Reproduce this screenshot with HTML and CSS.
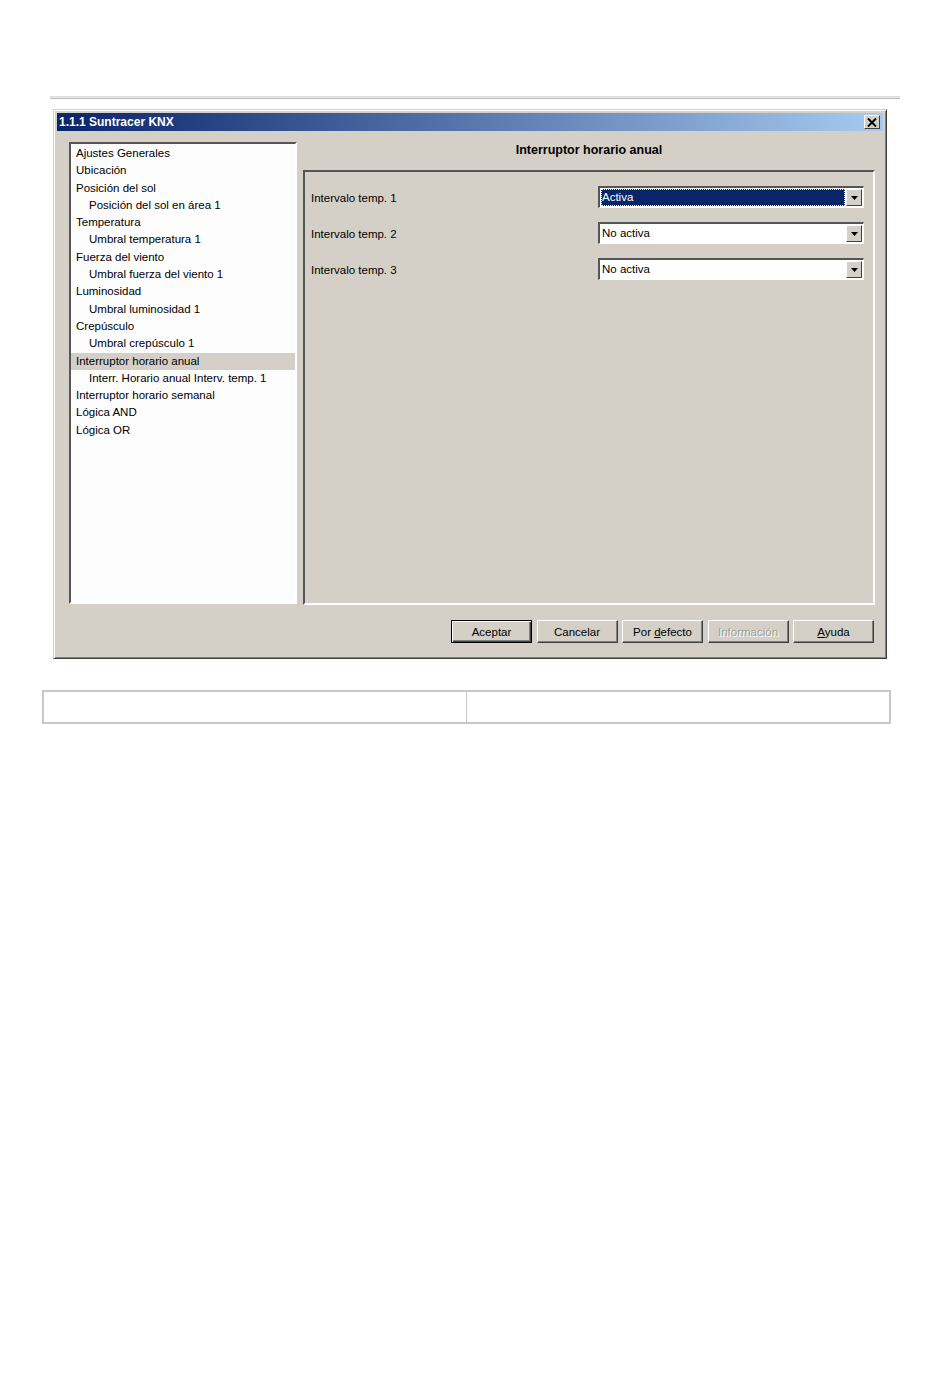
FILE: index.html
```html
<!DOCTYPE html>
<html>
<head>
<meta charset="utf-8">
<link rel="stylesheet" href="styles.css">
</head>
<body>
<div class="rule"></div>
<div class="dialog">
  <div class="titlebar">
    <span class="title">1.1.1 Suntracer KNX</span>
    <span class="close"><svg width="10" height="9" viewBox="0 0 10 9"><path d="M1 0.5 L9 8.5 M9 0.5 L1 8.5" stroke="#000" stroke-width="2"/></svg></span>
  </div>
  <div class="content">
    <div class="tree">
      <div class="item">Ajustes Generales</div>
      <div class="item">Ubicación</div>
      <div class="item">Posición del sol</div>
      <div class="item sub">Posición del sol en área 1</div>
      <div class="item">Temperatura</div>
      <div class="item sub">Umbral temperatura 1</div>
      <div class="item">Fuerza del viento</div>
      <div class="item sub">Umbral fuerza del viento 1</div>
      <div class="item">Luminosidad</div>
      <div class="item sub">Umbral luminosidad 1</div>
      <div class="item">Crepúsculo</div>
      <div class="item sub">Umbral crepúsculo 1</div>
      <div class="item selected">Interruptor horario anual</div>
      <div class="item sub">Interr. Horario anual Interv. temp. 1</div>
      <div class="item">Interruptor horario semanal</div>
      <div class="item">Lógica AND</div>
      <div class="item">Lógica OR</div>
    </div>
    <div class="right">
      <div class="heading">Interruptor horario anual</div>
      <div class="panel">
        <div class="row">
          <span class="label">Intervalo temp. 1</span>
          <div class="combo"><span class="value focused">Activa</span><span class="arrow"><svg width="7" height="4" viewBox="0 0 7 4"><path d="M0 0 H7 L3.5 4 Z" fill="#000"/></svg></span></div>
        </div>
        <div class="row">
          <span class="label">Intervalo temp. 2</span>
          <div class="combo"><span class="value">No activa</span><span class="arrow"><svg width="7" height="4" viewBox="0 0 7 4"><path d="M0 0 H7 L3.5 4 Z" fill="#000"/></svg></span></div>
        </div>
        <div class="row">
          <span class="label">Intervalo temp. 3</span>
          <div class="combo"><span class="value">No activa</span><span class="arrow"><svg width="7" height="4" viewBox="0 0 7 4"><path d="M0 0 H7 L3.5 4 Z" fill="#000"/></svg></span></div>
        </div>
      </div>
    </div>
  </div>
  <div class="buttons">
    <button class="btn default">Aceptar</button>
    <button class="btn">Cancelar</button>
    <button class="btn">Por <u>d</u>efecto</button>
    <button class="btn disabled">Información</button>
    <button class="btn"><u>A</u>yuda</button>
  </div>
</div>
<table class="grid">
  <tr><td></td><td></td></tr>
</table>
</body>
</html>
```

FILE: styles.css
```css
* { box-sizing: border-box; }
body {
  margin: 0;
  background: #fff;
  font-family: "Liberation Sans", Arial, sans-serif;
  font-size: 11.5px;
  color: #000;
}
.rule {
  margin: 96px 0 0 50px;
  width: 850px;
  height: 3px;
  border-top: 1px solid #dcdcdc;
  border-bottom: 1px solid #bdbdbd;
  background: #e6e6e6;
}
.dialog {
  margin: 10px 0 0 53px;
  width: 834px;
  height: 550px;
  background: #d4d0c8;
  border-top: 1px solid #d4d0c8;
  border-left: 1px solid #d4d0c8;
  border-right: 1px solid #404040;
  border-bottom: 1px solid #404040;
  box-shadow: inset 1px 1px 0 #fff, inset -1px -1px 0 #808080;
  padding: 3px 3px 0 3px;
  display: flex;
  flex-direction: column;
}
.titlebar {
  height: 18px;
  background: linear-gradient(to right, #0a246a, #a6caf0);
  display: flex;
  align-items: center;
  justify-content: space-between;
  padding: 0 3px 0 2px;
}
.title {
  color: #fff;
  font-weight: bold;
  font-size: 12px;
}
.close {
  width: 16px;
  height: 14px;
  background: #d4d0c8;
  border-top: 1px solid #fff;
  border-left: 1px solid #fff;
  border-right: 1px solid #404040;
  border-bottom: 1px solid #404040;
  display: flex;
  align-items: center;
  justify-content: center;
}
.content {
  display: flex;
  gap: 6px;
  padding: 11px 0 0 12px;
}
.tree {
  width: 228px;
  height: 462px;
  background: #fdfdfd;
  border-top: 2px solid #555;
  border-left: 2px solid #555;
  border-right: 2px solid #fff;
  border-bottom: 2px solid #fff;
  padding: 1px 0 0 0;
}
.item {
  height: 17.3px;
  line-height: 17px;
  padding-left: 5px;
  white-space: nowrap;
}
.item.sub { padding-left: 18px; }
.item.selected { background: #d4d0c8; }
.right {
  width: 572px;
  display: flex;
  flex-direction: column;
}
.heading {
  height: 28px;
  padding-top: 1px;
  text-align: center;
  font-weight: bold;
  font-size: 12.5px;
  line-height: 14px;
}
.panel {
  height: 435px;
  border-top: 2px solid #555;
  border-left: 2px solid #555;
  border-right: 2px solid #fff;
  border-bottom: 2px solid #fff;
  padding: 14px 9px 0 6px;
}
.row {
  height: 36px;
  display: flex;
  justify-content: space-between;
  align-items: flex-start;
}
.label {
  padding-top: 5px;
  line-height: 14px;
}
.combo {
  width: 266px;
  height: 22px;
  background: #fff;
  border-top: 2px solid #555;
  border-left: 2px solid #555;
  border-right: 1px solid #fff;
  border-bottom: 1px solid #fff;
  display: flex;
  align-items: stretch;
  padding: 1px;
}
.value {
  flex: 1;
  line-height: 16px;
  padding-left: 1px;
}
.value.focused {
  background: #0a246a;
  color: #fff;
  outline: 1px dotted #ffe;
  outline-offset: -1px;
  margin-right: 1px;
}
.arrow {
  width: 16px;
  background: #d4d0c8;
  border-top: 1px solid #fff;
  border-left: 1px solid #fff;
  border-right: 1px solid #404040;
  border-bottom: 1px solid #404040;
  display: flex;
  align-items: center;
  justify-content: center;
}
.buttons {
  display: flex;
  justify-content: flex-end;
  gap: 4.5px;
  padding: 15px 9px 0 0;
}
.btn {
  width: 81px;
  height: 23px;
  font-family: "Liberation Sans", Arial, sans-serif;
  font-size: 11.5px;
  color: #000;
  background: #d4d0c8;
  border-top: 1px solid #fff;
  border-left: 1px solid #fff;
  border-right: 1px solid #404040;
  border-bottom: 1px solid #404040;
  box-shadow: inset -1px -1px 0 #808080;
  padding: 0;
}
.btn.default {
  border: 1px solid #000;
  box-shadow: inset 1px 1px 0 #fff, inset -1px -1px 0 #404040, inset -2px -2px 0 #808080;
}
.btn.disabled {
  color: #a09e98;
  text-shadow: 1px 1px 0 #fff;
}
.grid {
  margin: 31px 0 0 42px;
  width: 849px;
  height: 34px;
  border-collapse: collapse;
  border: 2px solid #c8c8c8;
}
.grid td {
  border: 1px solid #c8c8c8;
  width: 50%;
  padding: 0;
}
```
